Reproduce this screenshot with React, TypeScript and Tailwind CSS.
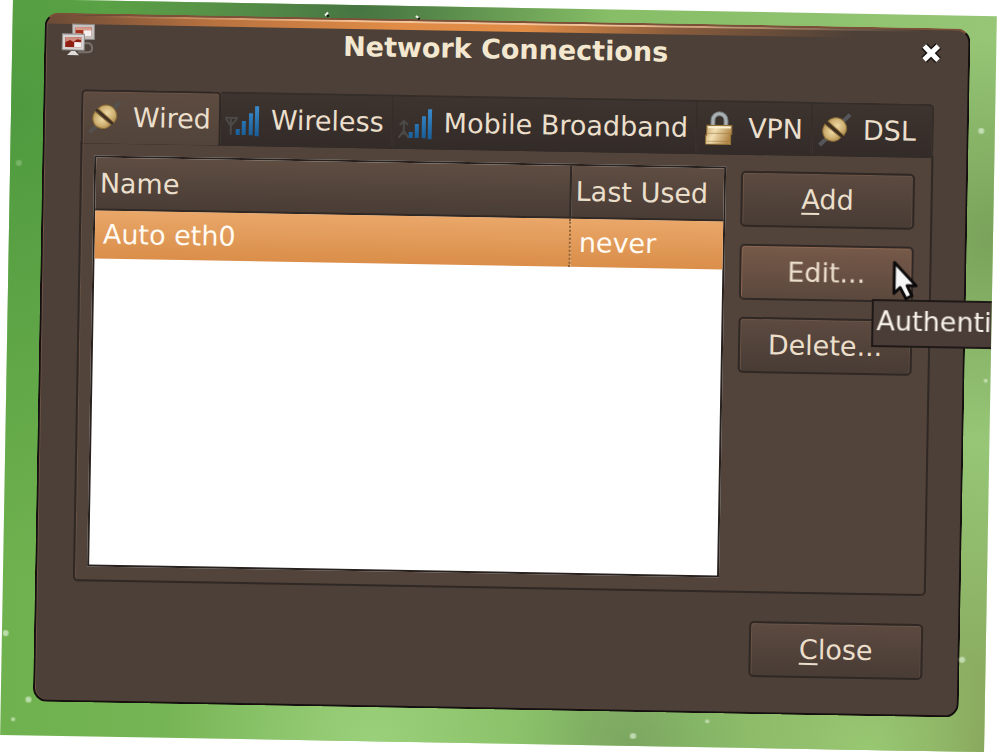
import React, { useState } from "react";

interface Tab {
    id: string;
    label: string;
    icon: React.ReactNode;
}

interface Connection {
    name: string;
    lastUsed: string;
}

function NetworkIcon() {
    return (
        <svg viewBox="0 0 34 34" className="size-[34px]" aria-hidden="true">
            <path d="M23 20h5q3 1 3 5t-5 4h-9" fill="none" stroke="#77706b" strokeWidth="2" />
            <rect x="11" y="1" width="22" height="15" fill="#c4c1bf" stroke="#8c8785" />
            <rect x="14" y="4" width="16" height="9" fill="#a3321c" />
            <path d="M14 4h16v3H14z" fill="#d79b8c" />
            <path d="M22 7h8v6h-8z" fill="#f4eeee" />
            <path d="M14 10h6v3h-6z" fill="#d9a99c" />
            <rect x="1" y="11" width="22" height="16" fill="#d8d6d5" stroke="#918c8a" />
            <rect x="4" y="14" width="16" height="10" fill="#8f1f12" />
            <path d="M4 14h16v3l-4-1-4 3-3-2-5 2z" fill="#cf8d80" />
            <path d="M13 19h7v5h-7z" fill="#f7f2f2" />
            <path d="M10 28h4l4 4H6z" fill="#dddcdb" />
        </svg>
    );
}

function PlugIcon({ wire }: { wire: string }) {
    return (
        <svg viewBox="0 0 36 36" className="size-9" aria-hidden="true">
            <defs>
                <radialGradient id="brass" cx="0.5" cy="0.45" r="0.6">
                    <stop offset="0" stopColor="#ecd7a2" />
                    <stop offset="0.6" stopColor="#d0b274" />
                    <stop offset="1" stopColor="#b08d4d" />
                </radialGradient>
            </defs>
            <path d="M3 33l7-7M26 9l7-7" stroke={wire} strokeWidth="4" />
            <path d="M8 12C4 18 6 26 12 28c4 2 9 1 12-3z" fill="url(#brass)" stroke="#8a6d38" strokeWidth="1" />
            <path d="M11 9c4-5 12-5 16 0s4 9 0 14z" fill="url(#brass)" stroke="#8a6d38" strokeWidth="1" />
            <path d="M9 10l17 14" stroke="#3f2e1e" strokeWidth="2" />
        </svg>
    );
}

function SignalIcon({ mast }: { mast: string }) {
    return (
        <svg viewBox="0 0 36 36" className="size-9" aria-hidden="true">
            <defs>
                <linearGradient id="signal" x1="0" y1="0" x2="0" y2="36" gradientUnits="userSpaceOnUse">
                    <stop offset="0.1" stopColor="#3b8bcc" />
                    <stop offset="1" stopColor="#165a94" />
                </linearGradient>
            </defs>
            <path d={mast} fill="none" stroke="#4b4a49" strokeWidth="2" />
            <path d="M11 27h4v6h-4zM17 19h4v14h-4zM24 11h4v22h-4zM30 4h4v30h-4z" fill="url(#signal)" />
        </svg>
    );
}

function LockIcon() {
    return (
        <svg viewBox="0 0 36 36" className="size-9" aria-hidden="true">
            <defs>
                <linearGradient id="lock" x1="0" y1="0" x2="1" y2="0.3">
                    <stop offset="0" stopColor="#c9a469" />
                    <stop offset="0.4" stopColor="#f2dfb4" />
                    <stop offset="1" stopColor="#b48a4a" />
                </linearGradient>
            </defs>
            <path d="M11 18v-8a6 6 0 0 1 13 0v8" fill="none" stroke="#6f7678" strokeWidth="5" />
            <path d="M11 18v-8a6 6 0 0 1 13 0v8" fill="none" stroke="#aab0b1" strokeWidth="3" />
            <path d="M5 15h25v9h-1v10H4v-9h1z" fill="url(#lock)" stroke="#94703a" strokeWidth="1" />
            <path d="M6 17h23" stroke="#fbf0d2" strokeWidth="2" />
            <path d="M6 23h23M5 31h24" stroke="#9c7b45" strokeWidth="1" opacity="0.6" />
        </svg>
    );
}

function Pointer() {
    return (
        <svg viewBox="0 0 28 42" className="pointer-events-none absolute left-[153px] top-[14px] z-20 h-[42px] w-7" aria-hidden="true">
            <path
                d="M2 2v31l6-6 6 11 6-3-5-10h9z"
                fill="#f6f6f6"
                stroke="#0c0a0a"
                strokeWidth="3"
                strokeLinejoin="round"
            />
        </svg>
    );
}

// dew drops on the wallpaper
function Drops() {
    return (
        <svg viewBox="0 0 984 737" className="pointer-events-none absolute inset-0 size-full" aria-hidden="true">
            <g fill="#dcefd2" opacity="0.7">
                <circle cx="3" cy="635" r="3" />
                <circle cx="27" cy="701" r="3" />
                <circle cx="12" cy="721" r="2" />
                <circle cx="8" cy="164" r="3" opacity="0.4" />
                <circle cx="633" cy="727" r="3" />
                <circle cx="707" cy="711" r="2" />
                <circle cx="961" cy="645" r="3" />
                <circle cx="971" cy="115" r="3" />
                <circle cx="980" cy="365" r="2" />
            </g>
            <path d="M312 11l3-3M403 10l3 2" stroke="#f2f2ec" strokeWidth="2" />
            <path d="M314 12l2-1M405 13l2-1" stroke="#14100e" strokeWidth="2" />
        </svg>
    );
}

const tabs: Tab[] = [
    { id: "wired", label: "Wired", icon: <PlugIcon wire="#54504e" /> },
    { id: "wireless", label: "Wireless", icon: <SignalIcon mast="M6 33V16M0 16h13M1 17l5 7 6-7" /> },
    { id: "mobile", label: "Mobile Broadband", icon: <SignalIcon mast="M6 16v14M2 20l4-4 4 4M1 33l5-7 5 7" /> },
    { id: "vpn", label: "VPN", icon: <LockIcon /> },
    { id: "dsl", label: "DSL", icon: <PlugIcon wire="#55565a" /> },
];

const connections: Connection[] = [{ name: "Auto eth0", lastUsed: "never" }];

const buttonClass =
    "h-14 w-[174px] shrink-0 rounded-[5px] border-2 border-[#302824] bg-linear-to-b from-[#5d4a40] via-[#52433a] to-[#483c35] shadow-[inset_1px_1px_0_#6b5548,inset_-1px_0_0_#5e4b40]";

export default function App() {
    const [active, setActive] = useState("wired");
    const [selected, setSelected] = useState(0);

    return (
        <div className="min-h-screen overflow-hidden bg-white font-['DejaVu_Sans',sans-serif] text-[27px] leading-8 text-[#ebdfcb]">
            <div className="relative -mt-px mr-[3px] ml-[13px] origin-top-left rotate-1 overflow-hidden bg-[radial-gradient(circle_at_35%_0%,#467442_0%,transparent_26%),radial-gradient(circle_at_0%_15%,#4f9a3f_0%,transparent_40%),radial-gradient(circle_at_38%_100%,#9bd07a_0%,transparent_22%),radial-gradient(circle_at_64%_100%,#7ca661_0%,transparent_12%),radial-gradient(circle_at_88%_100%,#98c872_0%,transparent_12%),radial-gradient(circle_at_100%_30%,#7aa25a_0%,transparent_18%),radial-gradient(circle_at_100%_100%,#87a45a_0%,transparent_25%),linear-gradient(to_right,#6fb14e,#96c676)] pt-[13px] pr-[26px] pb-[34px] pl-8">
                <Drops />
                <main className="rounded-[14px] border-2 border-[#15100f] border-t-[#7d5138] bg-[#4c4038] pr-[33px] pb-[35px] pl-[37px] shadow-[inset_1px_0_0_#705546]">
                    <header className="-mr-[33px] -ml-[37px] grid grid-cols-[1fr_auto_1fr] items-start rounded-t-xl bg-[linear-gradient(to_right,transparent_5%,#f3c39a_35%,#f3c39a_60%,transparent_95%),linear-gradient(to_right,#6b4a36_0%,#b87240_18%,#e08c46_38%,#e08c46_52%,#8a5c3c_68%,transparent_88%)] bg-size-[100%_2px,100%_9px] bg-no-repeat pr-[26px] pb-[26px] pl-[15px]">
                        <span className="flex h-12 items-start pt-2">
                            <NetworkIcon />
                        </span>
                        <h1 className="ml-2 pt-[11px] font-bold text-[#f3e7cf]">Network Connections</h1>
                        <button type="button" aria-label="Close window" className="mt-3 justify-self-end">
                            <svg viewBox="0 0 22 22" className="size-[22px]" aria-hidden="true">
                                <path d="M4 4l14 14M18 4L4 18" stroke="#1b1513" strokeWidth="8" />
                                <path d="M4 4l14 14M18 4L4 18" stroke="#fff" strokeWidth="5" />
                            </svg>
                        </button>
                    </header>

                    <div role="tablist" className="-ml-px flex">
                        {tabs.map((tab) => (
                            <button
                                key={tab.id}
                                type="button"
                                role="tab"
                                id={`tab-${tab.id}`}
                                aria-selected={active === tab.id}
                                onClick={() => setActive(tab.id)}
                                className={`-mb-0.5 flex h-[54px] items-center gap-2.5 border-t-2 pr-2 pl-1 whitespace-nowrap last:grow last:rounded-tr-[5px] ${
                                    active === tab.id
                                        ? "relative rounded-t-[5px] border-x-2 border-[#302824] bg-linear-to-b from-[#5d4b40] to-[#52443b] shadow-[inset_1px_1px_0_#6b5548]"
                                        : "border-r-2 border-[#352d29] bg-linear-to-b from-[#3d342f] to-[#332b28]"
                                }`}
                            >
                                {tab.icon}
                                {tab.label}
                            </button>
                        ))}
                    </div>

                    <section
                        role="tabpanel"
                        aria-labelledby={`tab-${active}`}
                        className="-ml-px flex gap-[15px] rounded-b-[5px] border-2 border-[#302824] bg-[#52443b] pt-3 pr-4 pb-[13px] pl-3 shadow-[inset_1px_0_0_#655044]"
                    >
                        <div className="min-h-[411px] grow border-2 border-[#28211e] bg-white">
                            <table className="w-full table-fixed border-separate border-spacing-0 text-left">
                                <thead>
                                    <tr className="h-[53px] bg-linear-to-b from-[#5f4d42] to-[#483c35]">
                                        <th className="border-r-2 border-b-2 border-[#302824] px-1 font-normal">Name</th>
                                        <th className="w-[152px] border-b-2 border-[#302824] px-1 font-normal whitespace-nowrap">Last Used</th>
                                    </tr>
                                </thead>
                                <tbody>
                                    {connections.map((connection, i) => (
                                        <tr
                                            key={connection.name}
                                            aria-selected={selected === i}
                                            onClick={() => setSelected(i)}
                                            className={`h-12 ${selected === i ? "bg-linear-to-b from-[#e9a769] to-[#da8e49] text-[#fffaf2]" : "text-[#3c3b37]"}`}
                                        >
                                            <td className="border-r-2 border-dotted border-[#8f6238] px-2">{connection.name}</td>
                                            <td className="px-2">{connection.lastUsed}</td>
                                        </tr>
                                    ))}
                                </tbody>
                            </table>
                        </div>

                        <div className="flex flex-col gap-[17px] pt-1">
                            <button type="button" className={buttonClass}>
                                <span className="underline underline-offset-4">A</span>dd
                            </button>
                            <div className="relative">
                                <button
                                    type="button"
                                    aria-describedby="edit-tip"
                                    className="h-14 w-[174px] rounded-[5px] border-2 border-[#302824] bg-linear-to-b from-[#765949] to-[#5b483d] shadow-[inset_1px_1px_0_#8d6651,inset_-1px_0_0_#7c5c4b]"
                                >
                                    Edit...
                                </button>
                                <div
                                    id="edit-tip"
                                    role="tooltip"
                                    className="absolute top-[53px] left-[133px] z-10 w-40 border-2 border-[#1e1816] bg-[#4a3d37] px-[3px] pt-1 pb-2 whitespace-nowrap text-[#f7f2ea]"
                                >
                                    Authenti
                                </div>
                                <Pointer />
                            </div>
                            <button type="button" className={buttonClass}>
                                Delete...
                            </button>
                        </div>
                    </section>

                    <footer className="mt-[28px] mr-[2px] flex justify-end">
                        <button type="button" className={buttonClass}>
                            <span className="underline underline-offset-4">C</span>lose
                        </button>
                    </footer>
                </main>
            </div>
        </div>
    );
}
